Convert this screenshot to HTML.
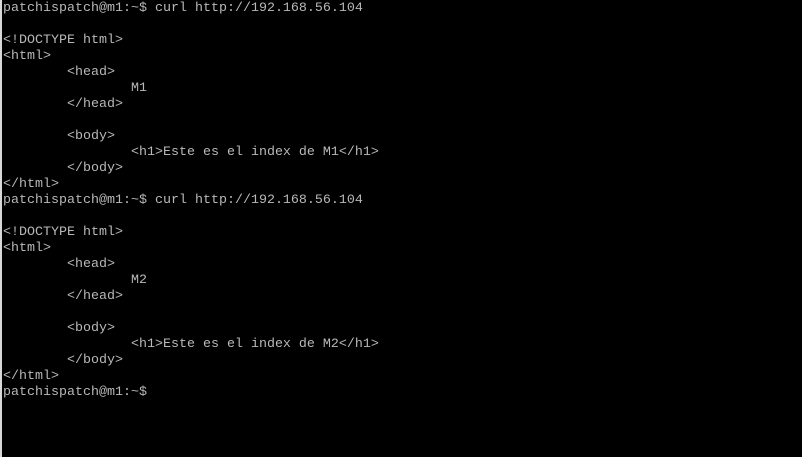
<!DOCTYPE html>
<html><head><style>
html,body{margin:0;padding:0;background:#000;width:802px;height:457px;overflow:hidden}
body{position:relative}
.edge{position:absolute;left:0;top:0;width:2px;height:457px;background:#d8d8d8}
pre{position:absolute;left:3px;top:1px;margin:0;font-family:"Liberation Mono","DejaVu Sans Mono",monospace;font-size:13.33px;line-height:16px;color:#b8b8b8;tab-size:8}
</style></head><body>
<div class="edge"></div>
<pre>patchispatch@m1:~$ curl http://192.168.56.104

&lt;!DOCTYPE html&gt;
&lt;html&gt;
        &lt;head&gt;
                M1
        &lt;/head&gt;

        &lt;body&gt;
                &lt;h1&gt;Este es el index de M1&lt;/h1&gt;
        &lt;/body&gt;
&lt;/html&gt;
patchispatch@m1:~$ curl http://192.168.56.104

&lt;!DOCTYPE html&gt;
&lt;html&gt;
        &lt;head&gt;
                M2
        &lt;/head&gt;

        &lt;body&gt;
                &lt;h1&gt;Este es el index de M2&lt;/h1&gt;
        &lt;/body&gt;
&lt;/html&gt;
patchispatch@m1:~$</pre>
</body></html>
